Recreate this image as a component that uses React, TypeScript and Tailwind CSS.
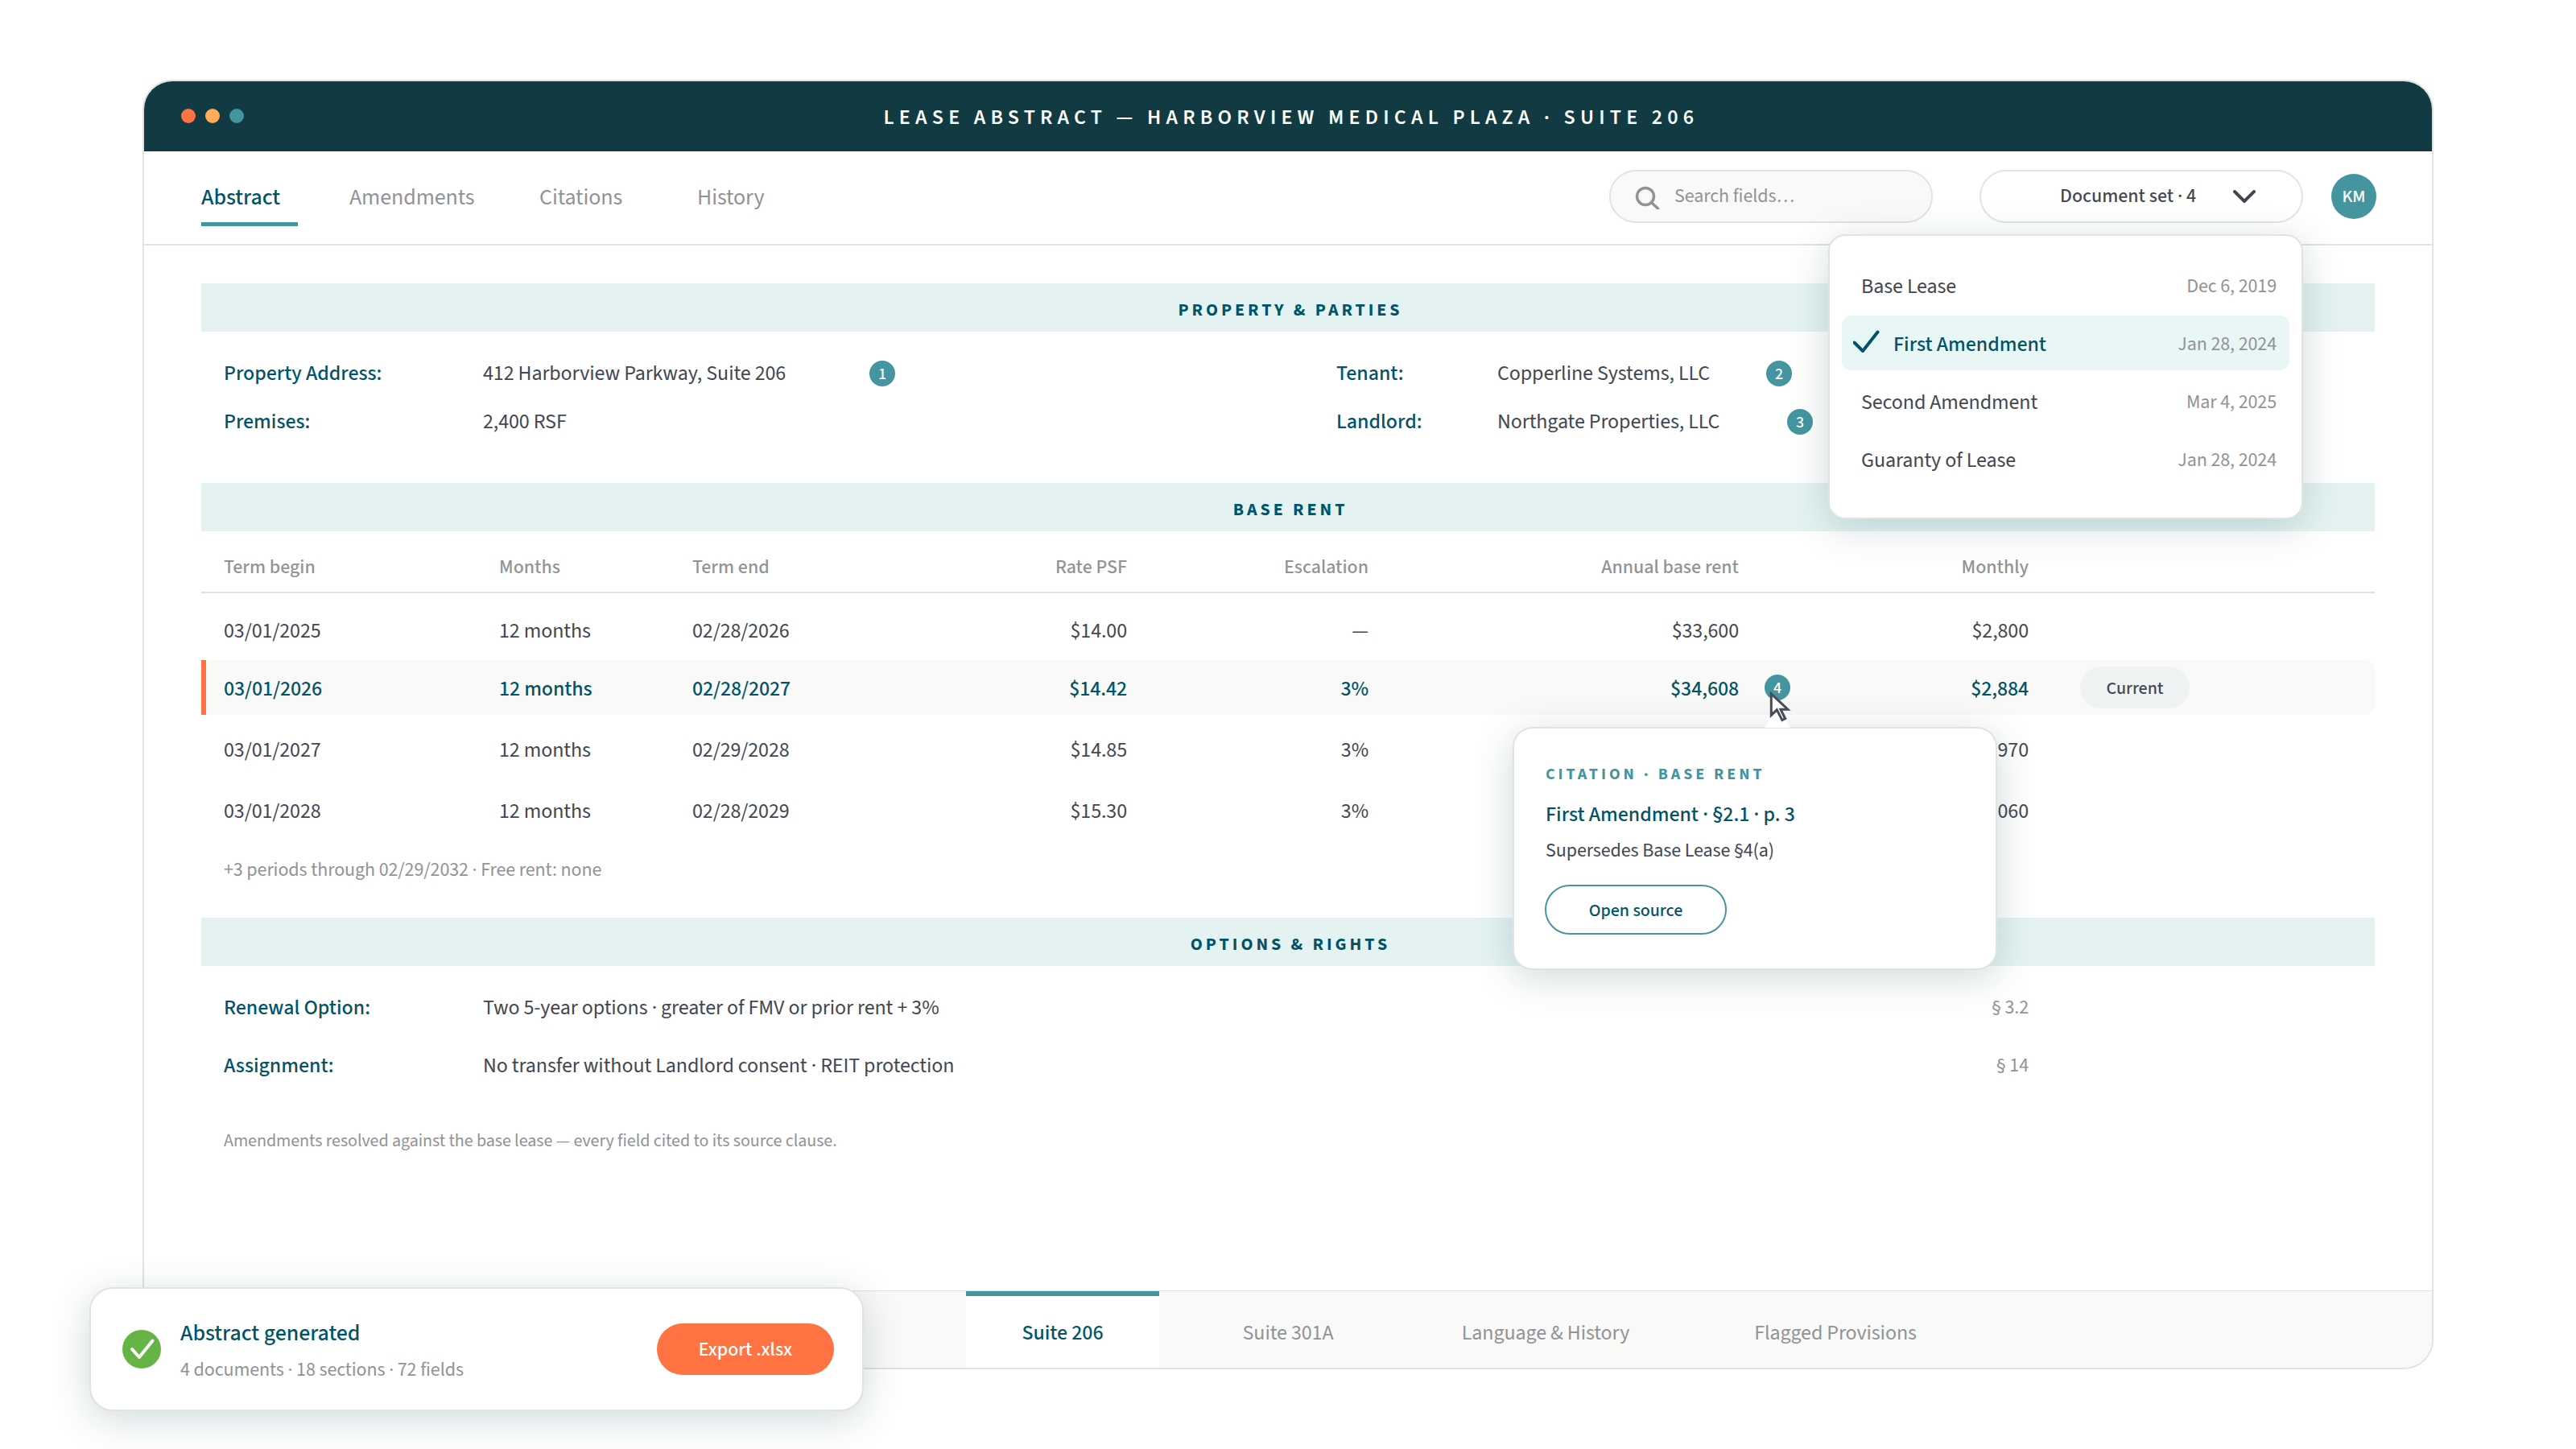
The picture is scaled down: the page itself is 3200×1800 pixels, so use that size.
import { ReactNode } from "react";

interface RentRow {
    begin: string;
    months: string;
    end: string;
    rate: string;
    escalation: string;
    annual: string;
    monthly: string;
}

const tabs = [
    { label: "Amendments", width: "w-[236px]" },
    { label: "Citations", width: "w-[196px]" },
    { label: "History", width: "w-[160px]" },
];

const documents = [
    { name: "Base Lease", date: "Dec 6, 2019" },
    { name: "First Amendment", date: "Jan 28, 2024", selected: true },
    { name: "Second Amendment", date: "Mar 4, 2025" },
    { name: "Guaranty of Lease", date: "Jan 28, 2024" },
];

const currentRow: RentRow = {
    begin: "03/01/2026",
    months: "12 months",
    end: "02/28/2027",
    rate: "$14.42",
    escalation: "3%",
    annual: "$34,608",
    monthly: "$2,884",
};

const firstRow: RentRow = {
    begin: "03/01/2025",
    months: "12 months",
    end: "02/28/2026",
    rate: "$14.00",
    escalation: "—",
    annual: "$33,600",
    monthly: "$2,800",
};

const laterRows: RentRow[] = [
    {
        begin: "03/01/2027",
        months: "12 months",
        end: "02/29/2028",
        rate: "$14.85",
        escalation: "3%",
        annual: "$35,640",
        monthly: "$2,970",
    },
    {
        begin: "03/01/2028",
        months: "12 months",
        end: "02/28/2029",
        rate: "$15.30",
        escalation: "3%",
        annual: "$36,720",
        monthly: "$3,060",
    },
];

const rentGrid =
    "grid grid-cols-[342px_240px_240px_300px_300px_460px_360px_1fr] items-center pl-7";

const Badge = ({ children }: { children: ReactNode }) => (
    <span className="flex size-8 shrink-0 items-center justify-center rounded-full bg-[#4595a0] pt-0.5 text-[20px] leading-none font-medium text-white">
        {children}
    </span>
);

const SectionBand = ({ title, className = "" }: { title: string; className?: string }) => (
    <h2
        className={`flex h-[60px] items-center justify-center bg-[#e4f3f2] pt-1.5 pl-1.5 text-[22px] font-bold tracking-[3.96px] text-[#005368] ${className}`}
    >
        {title}
    </h2>
);

const RentCells = ({ row }: { row: RentRow }) => (
    <>
        <span>{row.begin}</span>
        <span>{row.months}</span>
        <span>{row.end}</span>
        <span className="text-right">{row.rate}</span>
        <span className="text-right">{row.escalation}</span>
        <span className="text-right">{row.annual}</span>
        <span className="text-right">{row.monthly}</span>
    </>
);

const DocumentMenu = () => (
    <ul className="absolute top-20 right-0 z-20 flex h-[354px] w-[590px] flex-col gap-1 rounded-[21px] border-2 border-[#e1e2e4] bg-white px-[15px] pt-[27px] text-[26px] shadow-[0_10px_48px_rgba(17,58,67,0.19)]">
        {documents.map((doc) => (
            <li
                key={doc.name}
                className={
                    doc.selected
                        ? "flex h-[68px] items-center rounded-xl bg-[#e9f6f6] pt-1 pr-4 pl-3.5 text-[#005368]"
                        : "flex h-[68px] items-center pt-1 pr-4 pl-6 text-[#434753]"
                }
            >
                {doc.selected && (
                    <svg className="-mt-1 mr-[16px] h-8 w-[34px]" viewBox="0 0 34 32" fill="none">
                        <path
                            d="M1.5 15.5 12 26 30.5 2.5"
                            stroke="#005368"
                            strokeWidth="4"
                            strokeLinecap="round"
                            strokeLinejoin="round"
                        />
                    </svg>
                )}
                <span className={doc.selected ? "font-medium tracking-normal" : ""}>{doc.name}</span>
                <span className="ml-auto text-[24px] text-[#919398]">{doc.date}</span>
            </li>
        ))}
    </ul>
);

const CitationPopover = () => (
    <div className="absolute top-[65px] left-[-313px] z-10 h-[302px] w-[602px] rounded-[25px] border-2 border-[#e1e2e4] bg-white pt-[41px] pl-[39px] shadow-[0_10px_48px_rgba(17,58,67,0.19)]">
        <svg className="absolute top-[-26px] left-[311px]" width="32" height="25" viewBox="0 0 32 25">
            <path d="M0 25 16 0 32 25Z" fill="white" />
        </svg>
        <p className="text-[20px] leading-[32px] font-bold tracking-[3.96px] text-[#4595a0]">
            CITATION · BASE RENT
        </p>
        <p className="mt-2.5 text-[26px] leading-[48px] font-medium tracking-normal text-[#005368]">
            First Amendment · §2.1 · p. 3
        </p>
        <p className="text-[24px] leading-[42px] text-[#434753]">Supersedes Base Lease §4(a)</p>
        <button className="mt-[21px] -ml-px block h-[62px] w-[226px] rounded-full border-2 border-[#4595a0] pt-0.5 text-[22px] font-medium tracking-normal text-[#005368]">
            Open source
        </button>
    </div>
);

const Cursor = () => (
    <svg className="absolute top-[16px] left-[4px] z-20" width="32" height="48" viewBox="0 0 32 48">
        <path
            d="M4.3 8v26.4l7-6.6 6.6 12.8 3.8-1.9-5.8-11.5h9Z"
            fill="white"
            stroke="#484c59"
            strokeWidth="3"
        />
    </svg>
);

const Toast = () => (
    <div className="absolute top-[1599px] left-[111px] z-30 flex h-[154px] w-[962px] items-center rounded-[29px] border-2 border-[#e1e2e4] bg-white pr-[35px] pl-[39px] shadow-[0_10px_48px_rgba(17,58,67,0.19)]">
        <svg width="48" height="48" viewBox="0 0 48 48" fill="none">
            <circle cx="24" cy="24" r="24" fill="#66b446" />
            <path
                d="m12 24 9 10 16.5-20.5"
                stroke="white"
                strokeWidth="4"
                strokeLinecap="round"
                strokeLinejoin="round"
            />
        </svg>
        <div className="ml-6 pt-1.5">
            <p className="text-[28px] leading-[42px] font-medium tracking-normal text-[#005368]">
                Abstract generated
            </p>
            <p className="mt-[3px] text-[24px] leading-[44px] text-[#919398]">
                4 documents · 18 sections · 72 fields
            </p>
        </div>
        <button className="ml-auto h-16 w-[220px] rounded-full bg-[#ff7342] pt-0.5 text-[24px] font-medium tracking-normal text-white">
            Export .xlsx
        </button>
    </div>
);

export default function App() {
    return (
        <div className="relative h-[1800px] w-[3200px] bg-white px-[177px] pt-[99px] font-['Source_Sans_3','Source_Sans_Pro','Noto_Sans_CJK_SC',sans-serif] text-[26px] leading-[36px] tracking-[-0.1px] text-[#434753]">
            <div className="flex h-[1602px] flex-col rounded-[37px] border-2 border-[#e1e2e4]">
                <header className="flex h-[87px] shrink-0 items-center rounded-t-[35px] bg-[#113a43] px-[46px] pb-px">
                    <div className="flex w-[200px] gap-3">
                        <span className="size-[18px] rounded-full bg-[#ff7342]" />
                        <span className="size-[18px] rounded-full bg-[#ffad5a]" />
                        <span className="size-[18px] rounded-full bg-[#4595a0]" />
                    </div>
                    <h1 className="flex-1 pt-1 pl-2 text-center font-semibold tracking-[6.21px] text-white">
                        LEASE ABSTRACT — HARBORVIEW MEDICAL PLAZA · SUITE 206
                    </h1>
                    <div className="w-[200px]" />
                </header>

                <nav className="flex h-[117px] shrink-0 items-center border-b-2 border-[#e1e2e4] pr-[69px] pb-[3px] pl-[71px] text-[28px] text-[#919398]">
                    <div className="relative w-[184px] pt-0.5 font-medium tracking-normal text-[#005368]">
                        Abstract
                        <span className="absolute bottom-[-18px] left-0 h-[5px] w-[120px] bg-[#4595a0]" />
                    </div>
                    {tabs.map((tab) => (
                        <span key={tab.label} className={`pt-0.5 ${tab.width}`}>
                            {tab.label}
                        </span>
                    ))}
                    <div className="ml-auto flex h-[66px] w-[402px] items-center rounded-full border-2 border-[#e1e2e4] bg-[#f9f9f7] pl-[30px] text-[24px]">
                        <svg className="mr-[17px]" width="32" height="32" viewBox="0 0 32 32" fill="none">
                            <circle cx="13" cy="16" r="10.5" stroke="#919398" strokeWidth="3.5" />
                            <path d="m21 24 7.5 7" stroke="#919398" strokeWidth="3.5" strokeLinecap="round" />
                        </svg>
                        Search fields…
                    </div>
                    <div className="relative ml-[58px]">
                        <button className="flex h-[66px] w-[402px] items-center rounded-full border-2 border-[#e1e2e4] bg-white pl-[98px] text-[24px] font-medium tracking-normal text-[#434753]">
                            Document set · 4
                            <svg className="ml-[44px]" width="32" height="20" viewBox="0 0 32 20" fill="none">
                                <path
                                    d="m4 4 12 12L28 4"
                                    stroke="#434753"
                                    strokeWidth="4"
                                    strokeLinecap="round"
                                    strokeLinejoin="round"
                                />
                            </svg>
                        </button>
                        <DocumentMenu />
                    </div>
                    <span className="ml-[35px] flex size-14 items-center justify-center rounded-full bg-[#4595a0] text-[22px] font-medium text-white">
                        KM
                    </span>
                </nav>

                <main className="flex-1 px-[71px] pt-[47px]">
                    <SectionBand title="PROPERTY & PARTIES" />
                    <div className="grid grid-cols-[1382px_1fr] pt-[22px] pl-7">
                        <div>
                            <div className="flex h-[60px] items-center">
                                <span className="w-[322px] font-medium tracking-normal text-[#005368]">
                                    Property Address:
                                </span>
                                <span className="w-[480px]">412 Harborview Parkway, Suite 206</span>
                                <Badge>1</Badge>
                            </div>
                            <div className="flex h-[60px] items-center">
                                <span className="w-[322px] font-medium tracking-normal text-[#005368]">Premises:</span>
                                <span>2,400 RSF</span>
                            </div>
                        </div>
                        <div>
                            <div className="flex h-[60px] items-center">
                                <span className="w-[200px] font-medium tracking-normal text-[#005368]">Tenant:</span>
                                <span className="w-[334px]">Copperline Systems, LLC</span>
                                <Badge>2</Badge>
                            </div>
                            <div className="flex h-[60px] items-center">
                                <span className="w-[200px] font-medium tracking-normal text-[#005368]">Landlord:</span>
                                <span className="w-[360px]">Northgate Properties, LLC</span>
                                <Badge>3</Badge>
                            </div>
                        </div>
                    </div>

                    <SectionBand title="BASE RENT" className="mt-[46px]" />
                    <div
                        className={`${rentGrid} h-[77px] border-b-2 border-[#e1e2e4] pt-3.5 text-[24px] font-medium tracking-normal text-[#919398]`}
                    >
                        <span>Term begin</span>
                        <span>Months</span>
                        <span>Term end</span>
                        <span className="text-right">Rate PSF</span>
                        <span className="text-right">Escalation</span>
                        <span className="text-right">Annual base rent</span>
                        <span className="text-right">Monthly</span>
                    </div>
                    <div className={`${rentGrid} mt-[7px] h-[76px] pt-1`}>
                        <RentCells row={firstRow} />
                    </div>
                    <div className="relative h-[68px]">
                        <div className={`${rentGrid} h-full rounded-xl bg-[#f9f9f7] pt-1 font-medium text-[#005368]`}>
                            <RentCells row={currentRow} />
                            <span className="-mt-1 ml-16 flex h-[52px] w-[136px] items-center justify-center rounded-full bg-[#eff3f4] pt-0.5 text-[22px] font-medium tracking-normal text-[#434753]">
                                Current
                            </span>
                        </div>
                        <span className="absolute inset-y-0 left-0 w-1.5 bg-[#ff7342]" />
                        <div className="absolute top-[18px] left-[1942px]">
                            <CitationPopover />
                            <Badge>4</Badge>
                            <Cursor />
                        </div>
                    </div>
                    <div className="mt-1">
                        {laterRows.map((row) => (
                            <div key={row.begin} className={`${rentGrid} h-[76px] pt-1`}>
                                <RentCells row={row} />
                            </div>
                        ))}
                    </div>
                    <p className="flex h-[72px] items-center pt-0.5 pl-7 text-[24px] text-[#919398]">
                        +3 periods through 02/29/2032 · Free rent: none
                    </p>

                    <SectionBand title="OPTIONS & RIGHTS" className="mt-6" />
                    <div className="pt-[16px] pr-[430px] pl-7">
                        <div className="flex h-[72px] items-center">
                            <span className="w-[322px] font-medium tracking-normal text-[#005368]">Renewal Option:</span>
                            <span>Two 5-year options · greater of FMV or prior rent + 3%</span>
                            <span className="ml-auto text-[24px] text-[#919398]">§ 3.2</span>
                        </div>
                        <div className="flex h-[72px] items-center">
                            <span className="w-[322px] font-medium tracking-normal text-[#005368]">Assignment:</span>
                            <span>No transfer without Landlord consent · REIT protection</span>
                            <span className="ml-auto text-[24px] text-[#919398]">§ 14</span>
                        </div>
                    </div>
                    <p className="mt-[39px] pl-7 text-[22px] tracking-[-0.06px] text-[#919398]">
                        Amendments resolved against the base lease — every field cited to its source clause.
                    </p>
                </main>

                <footer className="flex h-24 shrink-0 rounded-b-[35px] border-t border-[#e1e2e4] bg-[#f9f9f7] pl-[1021px] text-[#919398]">
                    <span className="flex w-[240px] items-center justify-center border-t-[6px] border-[#4595a0] bg-white pt-[3px] font-medium tracking-normal text-[#005368]">
                        Suite 206
                    </span>
                    <span className="flex w-80 items-center justify-center pt-[9px]">Suite 301A</span>
                    <span className="flex w-80 items-center justify-center pt-[9px]">Language &amp; History</span>
                    <span className="flex w-[400px] items-center justify-center pt-[9px]">Flagged Provisions</span>
                </footer>
            </div>
            <Toast />
        </div>
    );
}
